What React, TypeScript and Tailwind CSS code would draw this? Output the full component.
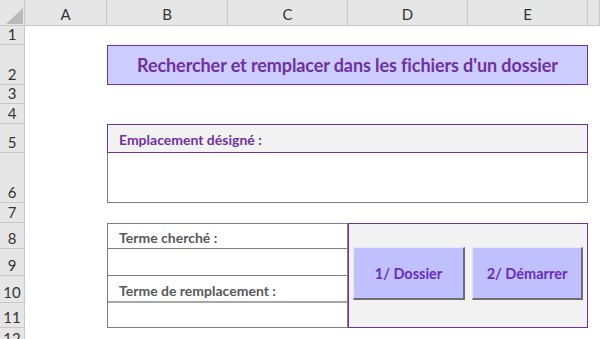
import React from "react";

const font = { fontFamily: "Lato, 'Open Sans', 'Liberation Sans', sans-serif" };

export default function App() {
  const cols = [
    { l: "A", c: "col-start-2" },
    { l: "B", c: "col-start-3" },
    { l: "C", c: "col-start-4" },
    { l: "D", c: "col-start-5" },
    { l: "E", c: "col-start-6" },
    { l: "", c: "col-start-7" },
  ];
  const rows = [
    { n: "1", c: "row-start-2" },
    { n: "2", c: "row-start-3" },
    { n: "3", c: "row-start-4" },
    { n: "4", c: "row-start-5" },
    { n: "5", c: "row-start-6" },
    { n: "6", c: "row-start-7" },
    { n: "7", c: "row-start-8" },
    { n: "8", c: "row-start-9" },
    { n: "9", c: "row-start-10" },
    { n: "10", c: "row-start-11" },
    { n: "11", c: "row-start-12" },
  ];
  return (
    <div
      style={font}
      className="w-[600px] h-[339px] overflow-hidden bg-white grid grid-cols-[25px_82px_121px_120px_120px_120px_12px] grid-rows-[26px_19px_40px_19px_20px_29px_50px_20px_26px_27px_27px_25px_11px]"
    >
      {/* corner */}
      <div className="col-start-1 row-start-1 bg-[#e6e6e6] border-r border-b border-[#c8c8c8] relative">
        <svg className="absolute right-[1px] bottom-[1px]" width="17" height="16" viewBox="0 0 17 16">
          <polygon points="17,0 17,16 0,16" fill="#b9b9b9" />
        </svg>
      </div>
      {cols.map((c) => (
        <div
          key={c.c}
          className={`${c.c} row-start-1 bg-[#e6e6e6] border-r border-b border-[#c8c8c8] flex items-center justify-center text-[15px] text-[#333] pt-[3px]`}
        >
          {c.l}
        </div>
      ))}
      {rows.map((r) => (
        <div
          key={r.c}
          className={`col-start-1 ${r.c} overflow-hidden bg-[#e6e6e6] border-r border-b border-[#c8c8c8] flex items-end justify-center text-[15px] leading-none text-[#333] pb-[2px]`}
        >
          {r.n}
        </div>
      ))}
      <div className="col-start-1 row-start-13 overflow-hidden bg-[#e6e6e6] border-r border-[#c8c8c8] flex items-start justify-center text-[15px] leading-none text-[#333] pt-[3px]">
        12
      </div>

      {/* Title */}
      <div className="col-start-3 col-span-4 row-start-3 bg-[#ccccff] border border-[#7030a0] flex items-center justify-center">
        <span className="text-[18px] font-bold text-[#7030a0] tracking-[-0.1px]">
          Rechercher et remplacer dans les fichiers d'un dossier
        </span>
      </div>

      {/* Emplacement */}
      <div className="col-start-3 col-span-4 row-start-6 bg-[#f2f2f2] border border-[#7030a0] flex items-center pl-[11px] pt-[1px]">
        <span className="text-[14px] font-bold text-[#7030a0]">Emplacement désigné :</span>
      </div>
      <div className="col-start-3 col-span-4 row-start-7 bg-white border-l border-r border-b border-[#7f7f7f]" />

      {/* Left inputs */}
      <div className="col-start-3 col-span-2 row-start-9 row-span-4 border border-[#7f7f7f] flex flex-col">
        <div className="h-[25px] flex items-end pl-[11px] pb-0 border-b border-[#7f7f7f]">
          <span className="text-[14px] leading-[20px] font-bold text-[#595959]">Terme cherché :</span>
        </div>
        <div className="h-[27px] border-b border-[#7f7f7f]" />
        <div className="h-[27px] flex items-end pl-[11px] pb-0 border-b-2 border-[#a6a6a6]">
          <span className="text-[14px] leading-[20px] font-bold text-[#595959]">Terme de remplacement :</span>
        </div>
        <div className="flex-1" />
      </div>

      {/* Right buttons */}
      <div className="col-start-5 col-span-2 row-start-9 row-span-4 bg-[#f2f2f2] border border-[#7030a0] flex items-start pt-[23px] pl-[4px] gap-[7px]">
        <div className="w-[112px] h-[53px] bg-[#c0c0ff] border-t border-l border-[#e4e4ff] border-r-2 border-b-2 border-r-[#6e6e6e] border-b-[#6e6e6e] flex items-center justify-center pt-[1px]">
          <span className="text-[14.5px] font-bold text-[#6a2cc0]">1/ Dossier</span>
        </div>
        <div className="w-[111px] h-[53px] bg-[#c0c0ff] border-t border-l border-[#e4e4ff] border-r-2 border-b-2 border-r-[#6e6e6e] border-b-[#6e6e6e] flex items-center justify-center pt-[1px]">
          <span className="text-[14.5px] font-bold text-[#6a2cc0]">2/ Démarrer</span>
        </div>
      </div>
    </div>
  );
}
